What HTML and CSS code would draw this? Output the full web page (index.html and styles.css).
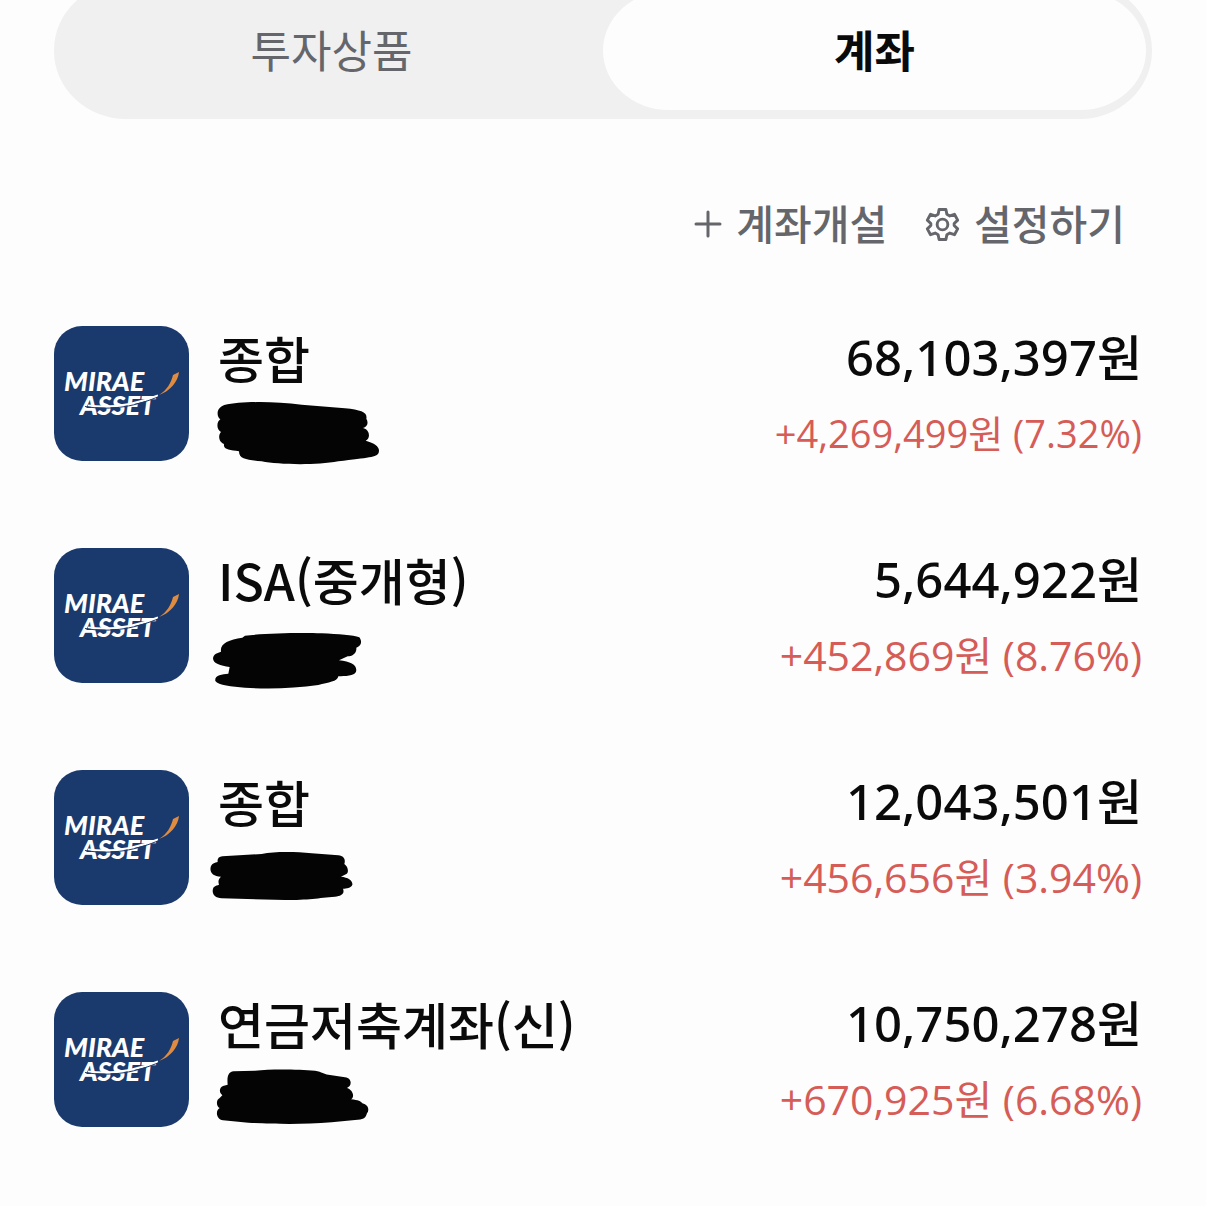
FILE: index.html
```html
<!DOCTYPE html>
<html lang="ko">
<head>
<meta charset="utf-8">
<meta name="viewport" content="width=device-width, initial-scale=1">
<title>계좌</title>
<link rel="stylesheet" href="styles.css">
</head>
<body>
<nav class="tabs" role="tablist">
  <button class="tab" type="button" role="tab" aria-selected="false">투자상품</button>
  <button class="tab tab-active" type="button" role="tab" aria-selected="true">계좌</button>
</nav>

<main>
  <div class="actions">
    <button class="action" type="button">
      <svg class="plus" viewBox="0 0 28 28" aria-hidden="true"><path d="M14 2V26M2 14H26"/></svg>
      계좌개설
    </button>
    <button class="action" type="button">
      <svg class="gear" viewBox="0 0 36 36" aria-hidden="true">
        <path d="M14.5 2.5H21.500L22.500 7.500L25.500 9.200L30.300 7.500L33.600 13.500L30 17V19L33.600 22.500L30.300 28.500L25.500 26.800L22.500 28.500L21.500 33.500H14.500L13.500 28.500L10.500 26.800L5.700 28.500L2.400 22.500L6 19V17L2.400 13.500L5.700 7.500L10.500 9.200L13.500 7.500Z"/>
        <circle cx="18" cy="18" r="5.500"/>
      </svg>
      설정하기
    </button>
  </div>

  <ul class="accounts">
    <li class="account">
      <svg class="logo" viewBox="0 0 135 135" role="img" aria-label="MIRAE ASSET">
        <g id="logo">
          <text class="logo-word" x="10" y="65">MIRAE</text>
          <text class="logo-word" x="26" y="89">ASSET</text>
          <path class="logo-line" d="M34 79.500C58 82.500 83 78 104 69.500"/>
          <path class="logo-cut" d="M31 80.500C58 85 83 80 106 70"/>
          <path class="logo-flame" d="M105 69C113 64 117 57 119 49L125 46C124 56 116 65 105 69Z"/>
        </g>
      </svg>
      <div class="info">
        <h2 class="name">종합</h2>
        <svg class="mask" viewBox="6 210 570 240" aria-hidden="true"><path d="M58 255C110 244 200 243 290 254L420 265C470 270 488 278 484 296C492 310 486 320 474 324C494 328 498 354 482 362C512 370 526 382 521 398C516 412 490 412 400 424C330 437 220 434 170 424C130 419 102 420 102 394C76 390 54 390 57 372C42 368 38 346 48 336C34 328 34 306 46 298C32 286 36 262 58 255Z"/></svg>
      </div>
      <div class="values">
        <p class="amount">68,103,397원</p>
        <p class="gain gain-long">+4,269,499원 (7.32%)</p>
      </div>
    </li>
    <li class="account">
      <svg class="logo" viewBox="0 0 135 135" role="img" aria-label="MIRAE ASSET"><use href="#logo"/></svg>
      <div class="info">
        <h2 class="name">ISA(중개형)</h2>
        <svg class="mask" viewBox="6 201 570 240" aria-hidden="true"><path d="M120 272C180 265 280 263 350 265C400 268 445 270 463 277C474 292 466 304 454 308C456 326 440 334 428 334L402 346C440 350 458 362 453 380C448 394 420 392 400 394C398 410 370 412 340 420C270 430 190 433 120 428C80 424 40 422 31 408C28 390 50 388 70 386L74 366C46 362 24 356 24 340C26 326 38 324 48 320C44 296 70 284 112 278Z"/></svg>
      </div>
      <div class="values">
        <p class="amount">5,644,922원</p>
        <p class="gain">+452,869원 (8.76%)</p>
      </div>
    </li>
    <li class="account">
      <svg class="logo" viewBox="0 0 135 135" role="img" aria-label="MIRAE ASSET"><use href="#logo"/></svg>
      <div class="info">
        <h2 class="name">종합</h2>
        <svg class="mask" viewBox="6 192 570 240" aria-hidden="true"><path d="M52 259L170 252C210 244 270 245 320 250L400 256C418 258 422 270 418 282C430 290 432 308 424 312L408 320C430 322 444 332 442 344C438 354 424 356 414 356C420 372 408 378 390 380C340 384 310 390 240 390L50 385C26 384 18 366 26 352C32 346 38 346 42 344C38 332 42 326 48 320C22 320 12 304 18 288C22 280 30 278 38 276C36 266 42 260 52 259Z"/></svg>
      </div>
      <div class="values">
        <p class="amount">12,043,501원</p>
        <p class="gain">+456,656원 (3.94%)</p>
      </div>
    </li>
    <li class="account">
      <svg class="logo" viewBox="0 0 135 135" role="img" aria-label="MIRAE ASSET"><use href="#logo"/></svg>
      <div class="info">
        <h2 class="name">연금저축계좌(신)</h2>
        <svg class="mask" viewBox="6 198 570 240" aria-hidden="true"><path d="M86 244L150 242C200 236 280 238 330 242C352 246 356 252 370 254L420 262C438 264 440 280 434 288L426 294C444 300 450 320 438 328C460 330 468 334 472 340C490 344 494 360 486 370C480 388 476 388 450 390L380 397C290 404 200 402 130 398L54 391C34 388 30 362 44 354C34 350 32 330 44 324L52 316C40 306 44 292 54 288L68 284C66 262 68 246 86 244Z"/></svg>
      </div>
      <div class="values">
        <p class="amount">10,750,278원</p>
        <p class="gain">+670,925원 (6.68%)</p>
      </div>
    </li>
  </ul>
</main>
</body>
</html>
```
FILE: styles.css
```css
* {
  box-sizing: border-box;
}

body {
  margin: 0;
  background: #fdfdfd;
  color: #0a0a0a;
  font-family: "Open Sans", "Noto Sans CJK KR", sans-serif;
  font-weight: 500;
}

button {
  border: 0;
  padding: 0;
  background: none;
  color: #64666b;
  font: inherit;
  cursor: pointer;
}

/* The tab bar is scrolled partly under the top edge. */
.tabs {
  display: grid;
  grid-template-columns: 1fr 1fr;
  margin: -18px 54px 0;
  padding: 9px 6px;
  border-radius: 72px / 68px;
  background: #f0f0f0;
}

.tab {
  height: 119px;
  border-radius: 66px / 60px;
  padding-bottom: 4px;
  font-size: 44px;
  font-weight: 400;
}

.tab-active {
  background: #fdfdfd;
  color: #0a0a0a;
  font-weight: 700;
}

.actions {
  display: flex;
  justify-content: flex-end;
  gap: 38px;
  margin: 73px 81px 0 54px;
}

.action {
  display: flex;
  align-items: center;
  gap: 14px;
  font-size: 41px;
  line-height: 64px;
}

.action svg {
  fill: none;
  stroke: #64666b;
  stroke-width: 3;
  stroke-linecap: round;
  stroke-linejoin: round;
}

.plus {
  width: 28px;
  height: 28px;
}

.gear {
  width: 35px;
  height: 35px;
}

.accounts {
  display: flex;
  flex-direction: column;
  gap: 78px;
  margin: 70px 64px 70px 54px;
  padding: 0;
  list-style: none;
}

.account {
  display: flex;
  align-items: flex-start;
  gap: 29px;
}

.logo {
  flex: none;
  width: 135px;
  height: 135px;
  border-radius: 28px;
  background: #1a396d;
}

.logo-word {
  fill: #fff;
  font: italic 900 27px Lato, sans-serif;
}

.logo-line,
.logo-cut {
  fill: none;
  stroke: #fff;
  stroke-width: 2;
}

.logo-cut {
  stroke: #1a396d;
  stroke-width: 1;
}

.logo-flame {
  fill: #df8c40;
}

.info {
  flex: 1;
}

.name,
.amount {
  margin: 0;
  font-size: 50px;
  font-weight: 500;
  line-height: 62px;
}

.name {
  font-family: "Noto Sans CJK KR", sans-serif;
}

.amount {
  font-family: "Noto Sans", "Noto Sans CJK KR", sans-serif;
  font-size: 49px;
}

.mask {
  display: block;
  width: 190px;
  height: 80px;
  margin: 2px 0 0 -11px;
  fill: #040404;
}

.values {
  text-align: right;
  white-space: nowrap;
}

.gain {
  margin: 13px 0 0;
  color: #d55c57;
  font-size: 41px;
  font-weight: 400;
  line-height: 64px;
}

.gain-long {
  font-size: 38px;
}
```
